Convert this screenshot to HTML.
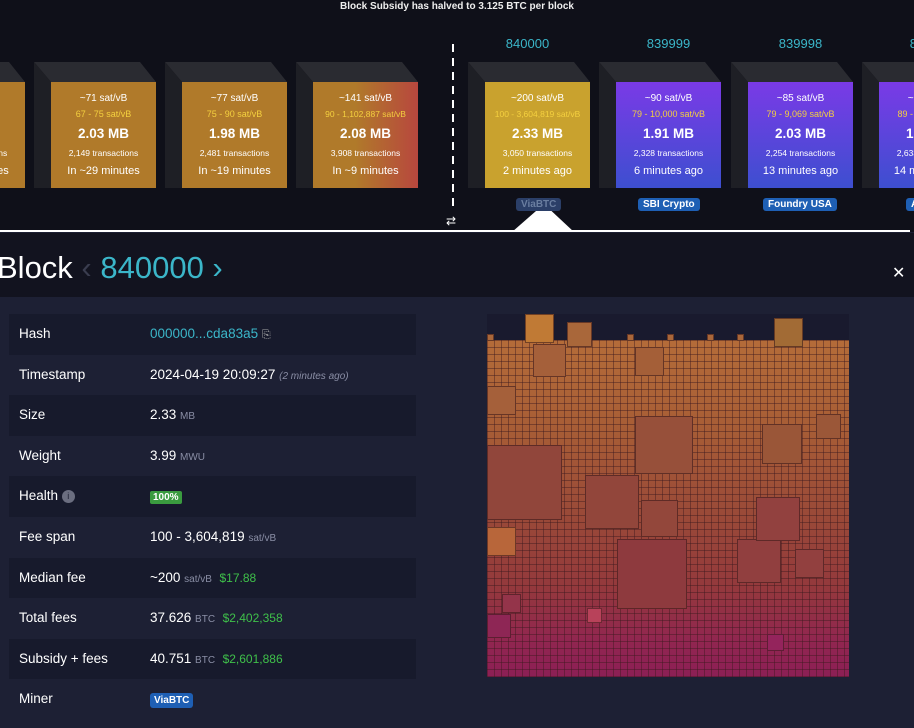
<!DOCTYPE html>
<html><head><meta charset="utf-8"><style>
*{margin:0;padding:0;box-sizing:border-box}
html,body{width:914px;height:728px;overflow:hidden}
body{background:#1d2034;font-family:"Liberation Sans",sans-serif;position:relative;color:#fff}
#wrap{position:absolute;left:0;top:0;width:914px;height:728px;overflow:hidden}
.top{position:absolute;left:0;top:0;width:914px;height:232px;background:#0f1019}
.hdr{position:absolute;left:0;top:233px;width:914px;height:64px;background:#12131f}
.line{position:absolute;left:0;top:230px;width:910px;height:2px;background:#fff}
.ban{position:absolute;top:1px;left:0;width:914px;text-align:center;font-size:10px;font-weight:bold;color:#eee}
.blk{position:absolute;top:82px;width:105px;height:106px;text-align:center;color:#fff;overflow:hidden}
.blk .a{font-size:10px;margin-top:11px}
.blk .b{font-size:9px;color:#f4d03f;margin-top:5px}
.blk .c{font-size:13.5px;font-weight:bold;margin-top:7px}
.blk .d{font-size:8.5px;margin-top:7px}
.blk .e{font-size:11px;margin-top:7px}
.mp{background:#b07a2a}
.mn{background:linear-gradient(#7a3ae6,#3d4fd0)}
.num{position:absolute;top:36px;width:105px;text-align:center;color:#3bb6c9;font-size:13px}
.tag{position:absolute;top:198px;font-size:10px;font-weight:bold;background:#1e5fb4;color:#fff;padding:1px 5px;border-radius:3px;white-space:nowrap}
.row{position:absolute;left:9px;width:407px;height:40.6px;font-size:13.5px;line-height:40px}
.row.dk{background:#171a2c}
.row .k{position:absolute;left:10px}
.row .v{position:absolute;left:141px;white-space:nowrap}
.u{font-size:10px;color:#8a8ea5}
.g{color:#3fc04a}
.tm{position:absolute;left:487px;top:314px;width:362px;height:363px;overflow:hidden;
background:linear-gradient(#b8703a 0%,#a85e36 30%,#9a4a38 55%,#94393c 75%,#912650 90%,#8c1f55 100%)}
.tm:after{content:"";position:absolute;inset:0;background:
repeating-linear-gradient(90deg,rgba(60,25,30,.45) 0 1px,transparent 1px 7px),
repeating-linear-gradient(0deg,rgba(60,25,30,.45) 0 1px,transparent 1px 7px)}
.sq{position:absolute;z-index:1;border:1px solid rgba(60,25,25,.6)}
</style></head><body><div id="wrap">
<div class="top"></div>
<div class="ban">Block Subsidy has halved to 3.125 BTC per block</div>
<svg style="position:absolute;left:0;top:0" width="914" height="232">
<g fill="#2a2b31">
<polygon points="-97,62 9,62 25,82 -80,82"/><polygon points="34,62 140,62 156,82 51,82"/><polygon points="165,62 271,62 287,82 182,82"/><polygon points="296,62 402,62 418,82 313,82"/>
<polygon points="468,62 574,62 590,82 485,82"/><polygon points="599,62 705,62 721,82 616,82"/><polygon points="731,62 837,62 853,82 748,82"/><polygon points="862,62 968,62 984,82 879,82"/>
</g>
<g fill="#1e1f25">
<polygon points="34,62 51,82 51,188 34,188"/><polygon points="165,62 182,82 182,188 165,188"/><polygon points="296,62 313,82 313,188 296,188"/>
<polygon points="468,62 485,82 485,188 468,188"/><polygon points="599,62 616,82 616,188 599,188"/><polygon points="731,62 748,82 748,188 731,188"/><polygon points="862,62 879,82 879,188 862,188"/>
</g>
<line x1="453" y1="44" x2="453" y2="208" stroke="#fff" stroke-width="2" stroke-dasharray="8,6"/>
<text x="446" y="225" font-size="12" fill="#fff" font-family="Liberation Sans">⇄</text>
<polygon points="512,232 544,204 574,232" fill="#fff"/>
</svg>
<div class="blk mp" style="left:-80px"><div class="a">~60 sat/vB</div><div class="b">60 - 67 sat/vB</div><div class="c">2.00 MB</div><div class="d">2,000 transactions</div><div class="e">In ~39 minutes</div></div>
<div class="blk mp" style="left:51px"><div class="a">~71 sat/vB</div><div class="b">67 - 75 sat/vB</div><div class="c">2.03 MB</div><div class="d">2,149 transactions</div><div class="e">In ~29 minutes</div></div>
<div class="blk mp" style="left:182px"><div class="a">~77 sat/vB</div><div class="b">75 - 90 sat/vB</div><div class="c">1.98 MB</div><div class="d">2,481 transactions</div><div class="e">In ~19 minutes</div></div>
<div class="blk mp" style="left:313px;background:linear-gradient(90deg,#b07a2a 40%,#b8473e)"><div class="a">~141 sat/vB</div><div class="b" style="font-size:8.5px">90 - 1,102,887 sat/vB</div><div class="c">2.08 MB</div><div class="d">3,908 transactions</div><div class="e">In ~9 minutes</div></div>
<div class="num" style="left:475px">840000</div><div class="num" style="left:616px">839999</div><div class="num" style="left:748px">839998</div><div class="num" style="left:879px">839997</div>
<div class="blk" style="left:485px;background:#c9a22e"><div class="a">~200 sat/vB</div><div class="b" style="font-size:8.5px">100 - 3,604,819 sat/vB</div><div class="c">2.33 MB</div><div class="d">3,050 transactions</div><div class="e">2 minutes ago</div></div>
<div class="blk mn" style="left:616px"><div class="a">~90 sat/vB</div><div class="b">79 - 10,000 sat/vB</div><div class="c">1.91 MB</div><div class="d">2,328 transactions</div><div class="e">6 minutes ago</div></div>
<div class="blk mn" style="left:748px"><div class="a">~85 sat/vB</div><div class="b">79 - 9,069 sat/vB</div><div class="c">2.03 MB</div><div class="d">2,254 transactions</div><div class="e">13 minutes ago</div></div>
<div class="blk mn" style="left:879px;width:35px;text-align:left"><div style="width:105px;text-align:center"><div class="a">~90 sat/vB</div><div class="b">89 - 9,000 sat/vB</div><div class="c">1.90 MB</div><div class="d">2,633 transactions</div><div class="e">14 minutes ago</div></div></div>
<div class="tag" style="left:516px;background:#2b3f68;color:#6a7ea0">ViaBTC</div>
<div class="tag" style="left:638px">SBI Crypto</div>
<div class="tag" style="left:763px">Foundry USA</div>
<div class="tag" style="left:906px">A</div>
<div class="line"></div>
<div class="hdr"></div>
<div style="position:absolute;left:-3px;top:250px;font-size:31px;color:#fff;white-space:nowrap">Block <span style="color:#3a3d4f">‹</span> <span style="color:#3bb6c9">840000 ›</span></div>
<div style="position:absolute;left:892px;top:263px;font-size:16px;color:#fff">✕</div>
<div class="row dk" style="top:314px"><span class="k">Hash</span><span class="v" style="color:#3bb6c9">000000...cda83a5 <span style="color:#aaa;font-size:11px">⎘</span></span></div>
<div class="row" style="top:354.6px"><span class="k">Timestamp</span><span class="v">2024-04-19 20:09:27 <i class="u" style="font-size:10px">(2 minutes ago)</i></span></div>
<div class="row dk" style="top:395.2px"><span class="k">Size</span><span class="v">2.33 <span class="u">MB</span></span></div>
<div class="row" style="top:435.8px"><span class="k">Weight</span><span class="v">3.99 <span class="u">MWU</span></span></div>
<div class="row dk" style="top:476.4px"><span class="k">Health <span style="display:inline-block;width:13px;height:13px;border-radius:50%;background:#6b6e80;color:#1d2034;font-size:9px;line-height:13px;text-align:center;vertical-align:middle">i</span></span><span class="v"><span style="background:#3a9b3f;font-size:10px;font-weight:bold;padding:1px 3px;border-radius:2px">100%</span></span></div>
<div class="row" style="top:517px"><span class="k">Fee span</span><span class="v">100 - 3,604,819 <span class="u">sat/vB</span></span></div>
<div class="row dk" style="top:557.6px"><span class="k">Median fee</span><span class="v">~200 <span class="u">sat/vB</span> &nbsp;<span class="g" style="font-size:12px">$17.88</span></span></div>
<div class="row" style="top:598.2px"><span class="k">Total fees</span><span class="v">37.626 <span class="u">BTC</span> &nbsp;<span class="g" style="font-size:12px">$2,402,358</span></span></div>
<div class="row dk" style="top:638.8px"><span class="k">Subsidy + fees</span><span class="v">40.751 <span class="u">BTC</span> &nbsp;<span class="g" style="font-size:12px">$2,601,886</span></span></div>
<div class="row" style="top:679.4px"><span class="k">Miner</span><span class="v"><span style="background:#1e5fb4;font-size:10px;font-weight:bold;padding:2px 4px;border-radius:3px">ViaBTC</span></span></div>
<div class="tm">
<div style="position:absolute;left:0;top:0;width:362px;height:26px;background:#191a2e;z-index:2"></div>
<div class="sq" style="z-index:3;left:38px;top:0;width:29px;height:29px;background:#c07a35"></div>
<div class="sq" style="z-index:3;left:80px;top:8px;width:25px;height:25px;background:#a9673a"></div>
<div class="sq" style="z-index:3;left:287px;top:4px;width:29px;height:29px;background:#a26b35"></div>
<div class="sq" style="z-index:3;left:0;top:20px;width:7px;height:7px;background:#a9673a"></div>
<div class="sq" style="z-index:3;left:140px;top:20px;width:7px;height:7px;background:#a9673a"></div>
<div class="sq" style="z-index:3;left:180px;top:20px;width:7px;height:7px;background:#a9673a"></div>
<div class="sq" style="z-index:3;left:220px;top:20px;width:7px;height:7px;background:#a9673a"></div>
<div class="sq" style="z-index:3;left:250px;top:20px;width:7px;height:7px;background:#a9673a"></div>
<div class="sq" style="left:46px;top:30px;width:33px;height:33px;background:#a5603a"></div>
<div class="sq" style="left:148px;top:33px;width:29px;height:29px;background:#a45f38"></div>
<div class="sq" style="left:0;top:72px;width:29px;height:29px;background:#a5603a"></div>
<div class="sq" style="left:148px;top:102px;width:58px;height:58px;background:#97503a"></div>
<div class="sq" style="left:275px;top:110px;width:40px;height:40px;background:#9a5638"></div>
<div class="sq" style="left:329px;top:100px;width:25px;height:25px;background:#9b5738"></div>
<div class="sq" style="left:0;top:131px;width:75px;height:75px;background:#91463b"></div>
<div class="sq" style="left:98px;top:161px;width:54px;height:54px;background:#92463b"></div>
<div class="sq" style="left:154px;top:186px;width:37px;height:37px;background:#93473b"></div>
<div class="sq" style="left:0;top:213px;width:29px;height:29px;background:#b8663a"></div>
<div class="sq" style="left:130px;top:225px;width:70px;height:70px;background:#8e3a3e"></div>
<div class="sq" style="left:250px;top:225px;width:44px;height:44px;background:#913f3f"></div>
<div class="sq" style="left:269px;top:183px;width:44px;height:44px;background:#92413f"></div>
<div class="sq" style="left:308px;top:235px;width:29px;height:29px;background:#92403f"></div>
<div class="sq" style="left:15px;top:280px;width:19px;height:19px;background:#94344a"></div>
<div class="sq" style="left:100px;top:294px;width:15px;height:15px;background:#b8425a"></div>
<div class="sq" style="left:0;top:300px;width:24px;height:24px;background:#8e2655"></div>
<div class="sq" style="left:280px;top:320px;width:17px;height:17px;background:#94245c"></div>
</div>
</div></body></html>
